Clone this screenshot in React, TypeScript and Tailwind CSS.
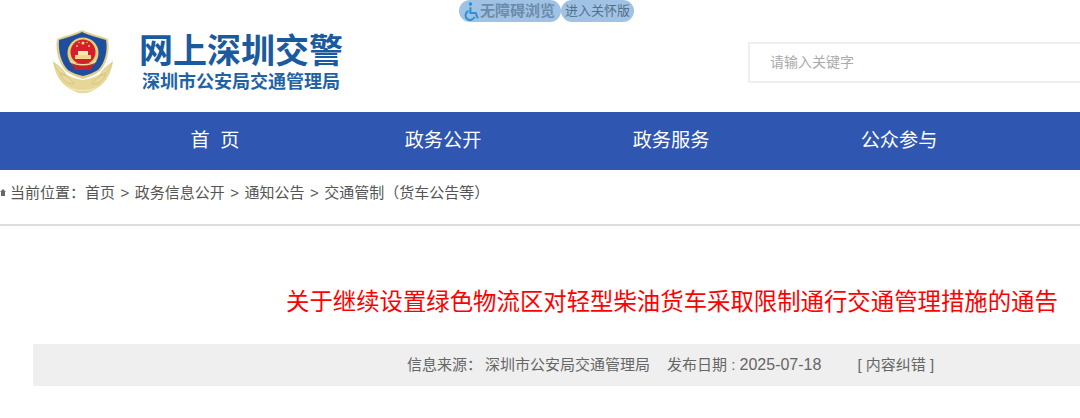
import React from 'react'

const cjk = "font-['Liberation_Sans','Noto_Sans_CJK_SC',sans-serif]"

function Leaf({ d }: { d: string }) {
  return <path d={d} fill="#e8da9c" stroke="#cdb873" strokeWidth="0.6" />
}

function PoliceBadge() {
  return (
    <svg width="62" height="64" viewBox="0 0 62 64" className="block">
      {/* wheat wreath */}
      <path d="M1 30 C2 44 10 56 22 61 C27 64 35 64 40 61 C52 56 60 44 61 30 C55 42 44 48 31 50 C18 48 7 42 1 30Z" fill="#e6d796" />
      <Leaf d="M2 33 C6 35 11 39 14 45 C8 44 4 39 2 33Z" />
      <Leaf d="M60 33 C56 35 51 39 48 45 C54 44 58 39 60 33Z" />
      <Leaf d="M8 44 C13 45 19 49 22 54 C15 54 11 50 8 44Z" />
      <Leaf d="M54 44 C49 45 43 49 40 54 C47 54 51 50 54 44Z" />
      <path d="M15 56 C22 63 40 63 47 56 C41 59 35 60 31 60 C27 60 21 59 15 56Z" fill="#f2e8bd" />
      {/* shield */}
      <path d="M30 0 C35 3 46 5 56 9 C58 21 55 34 48 41 C43 45 37 47 31 49 C25 47 19 45 14 41 C7 34 3 21 5 9 C15 5 25 3 30 0Z" fill="#e2cf8c" />
      <path d="M30 2 C35 5 45 7 54 10 C56 21 53 33 46 40 C41 43 36 45 31 46 C26 45 20 43 16 40 C9 33 6 21 7 10 C16 7 25 5 30 2Z" fill="#1f4f9c" />
      {/* emblem */}
      <circle cx="31" cy="23" r="15.5" fill="#e9cf78" />
      <circle cx="31" cy="22" r="12.5" fill="#d3202c" />
      <circle cx="31" cy="13" r="1.6" fill="#f2d56b" />
      <circle cx="25" cy="16" r="0.9" fill="#f2d56b" />
      <circle cx="37" cy="16" r="0.9" fill="#f2d56b" />
      <circle cx="27" cy="12.5" r="0.7" fill="#f2d56b" />
      <circle cx="35" cy="12.5" r="0.7" fill="#f2d56b" />
      <path d="M23 25 H39 V29 H23Z" fill="#f0d98a" />
      <path d="M26 21 H36 V25 H26Z" fill="#f6e9b4" />
      <path d="M20 33 H42 L39 40 H23Z" fill="#c8202b" />
      <path d="M18 31 C24 36 38 36 44 31" fill="none" stroke="#efdf9f" strokeWidth="1.6" />
    </svg>
  )
}

function WheelchairIcon() {
  return (
    <svg width="16" height="19" viewBox="0 0 15 18" className="block shrink-0" fill="none" stroke="#2f8fd8" strokeWidth="1.9">
      <circle cx="6" cy="2" r="1.7" fill="#2f8fd8" stroke="none" />
      <path d="M6 5 V10.5 H11 L13 15.5" />
      <path d="M4.2 8.5 A4.4 4.4 0 1 0 10 14" />
    </svg>
  )
}

function App() {
  return (
    <div className={`${cjk} w-[1080px] h-[418px] overflow-hidden bg-white relative`}>
      <div className="absolute top-0 left-[459px] flex items-center">
        <div className="h-[22px] w-[102px] rounded-full bg-[#a0c2e4] flex items-center pl-[5px] gap-0 text-[15px] font-bold text-[#6d8cab] whitespace-nowrap">
          <WheelchairIcon />
          <span>无障碍浏览</span>
        </div>
        <div className="h-[22px] w-[73px] rounded-full bg-[#a0c2e4] flex items-center justify-center text-[13px] text-[#55708c] whitespace-nowrap">
          进入关怀版
        </div>
      </div>

      <header className="h-[112px] flex items-start">
        <div className="ml-[52px] mt-[30px]">
          <PoliceBadge />
        </div>
        <div className="ml-[25px] mt-[29px] w-[219px]">
          <div className="text-[34px] leading-[44px] font-bold text-[#1a5a9e] whitespace-nowrap">网上深圳交警</div>
          <div className="ml-[3px] text-[18px] leading-[18px] font-bold text-[#1f63a6] whitespace-nowrap">深圳市公安局交通管理局</div>
        </div>
        <div className="ml-[390px] mt-[42px] w-[332px] h-[41px] border-2 border-r-0 border-[#eeeeee] pl-[20px] flex items-center text-[14px] text-[#aaaaaa]">
          请输入关键字
        </div>
      </header>

      <nav className="h-[58px] bg-[#2f56b0] flex items-center pl-[101px] text-[19.2px] text-white">
        <a className="w-[228px] text-center whitespace-pre">首  页</a>
        <a className="w-[228px] text-center">政务公开</a>
        <a className="w-[228px] text-center">政务服务</a>
        <a className="w-[228px] text-center">公众参与</a>
      </nav>

      <div className="h-[56px] border-b-2 border-[#dddddd] flex items-center pl-[10px] pb-[8px] text-[15px] text-[#555555] whitespace-nowrap relative">
        <svg width="6" height="7" viewBox="0 0 6 7" className="absolute left-0 top-[19px]">
          <path d="M0 3 L3 0 L6 3 H5 V7 H1 V3Z" fill="#666666" />
        </svg>
        <span>当前位置：</span>
        <span>首页</span>
        <span className="mx-[5.5px]">&gt;</span>
        <span>政务信息公开</span>
        <span className="mx-[5.5px]">&gt;</span>
        <span>通知公告</span>
        <span className="mx-[5.5px]">&gt;</span>
        <span>交通管制（货车公告等）</span>
      </div>

      <h1 className="mt-[58px] ml-[286px] text-[23.4px] leading-[36px] font-normal text-[#ff0000] whitespace-nowrap">
        关于继续设置绿色物流区对轻型柴油货车采取限制通行交通管理措施的通告
      </h1>

      <div className="ml-[33px] mt-[24px] h-[42px] bg-[#efefef] flex items-center pl-[374px] text-[15px] text-[#666666] whitespace-nowrap">
        <span>信息来源：</span>
        <span className="ml-[3px]">深圳市公安局交通管理局</span>
        <span className="ml-[17px]">发布日期 : <span className="text-[16px]">2025-07-18</span></span>
        <span className="ml-[36px]">[ 内容纠错 ]</span>
      </div>
    </div>
  )
}

export default App
